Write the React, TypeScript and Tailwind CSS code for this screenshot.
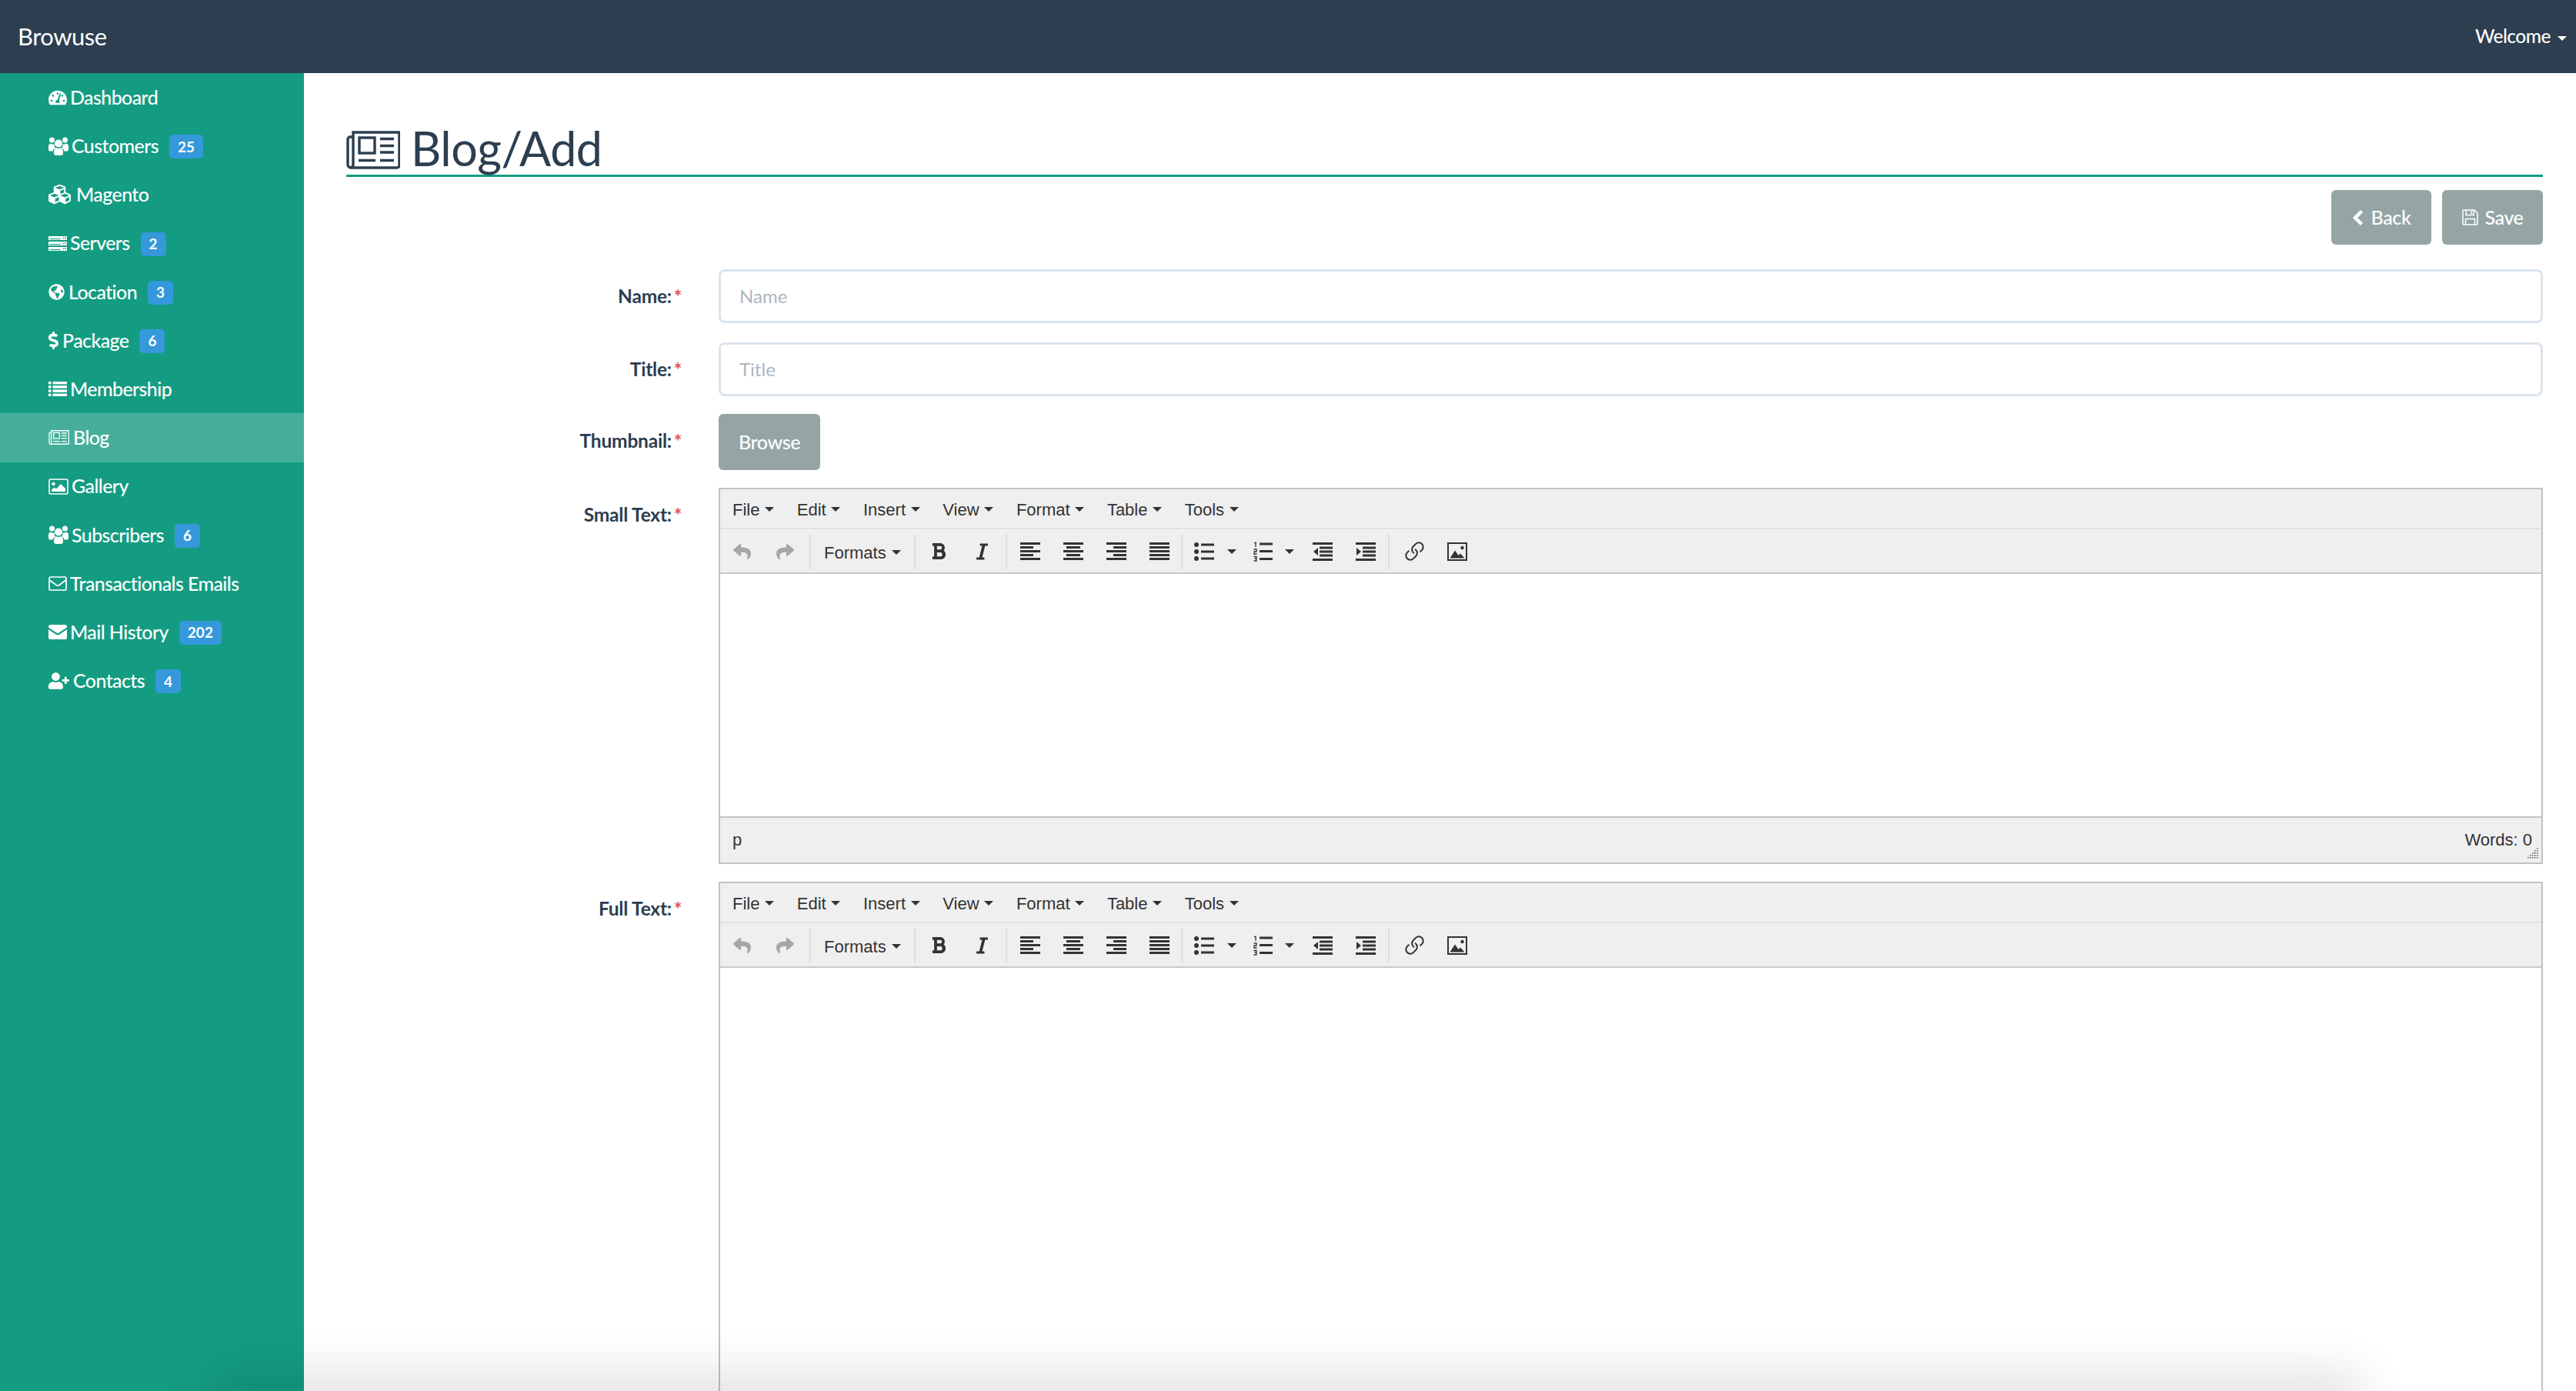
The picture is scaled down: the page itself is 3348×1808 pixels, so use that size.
import React from "react";
import {
  FaTachometerAlt,
  FaCubes,
  FaGlobeAmericas,
  FaDollarSign,
  FaUserPlus,
  FaReply,
  FaShare,
  FaBold,
  FaItalic,
} from "react-icons/fa";
import { Link } from "lucide-react";

const NewspaperIcon: React.FC<{ className?: string }> = ({ className }) => (
  <svg viewBox="0 0 70 50" fill="none" stroke="currentColor" strokeWidth="3.4" className={className}>
    <path d="M9 8H5a3 3 0 0 0-3 3v33a4 4 0 0 0 4 4h60a3 3 0 0 0 3-3V2H9v42a4 4 0 0 1-4 4" />
    <rect x="17" y="9" width="20" height="20" />
    <path d="M44 10.500h18M44 19.500h18M44 28h18M16 38.500h22M44 38.500h18" />
  </svg>
);

const UsersIcon = () => (
  <svg viewBox="0 0 26 24" fill="currentColor" className="w-[26px] h-[24px] mr-[4px]">
    <circle cx="13" cy="8.500" r="5" />
    <circle cx="4.500" cy="4" r="3.500" />
    <circle cx="21.500" cy="4" r="3.500" />
    <path d="M0 12.500q0-3.500 3-4 2 1.800 4.500.8-.5 3 1.500 5.200-2.800 1-3.500 4H2q-2 0-2-2z" />
    <path d="M26 12.500q0-3.500-3-4-2 1.800-4.500.8.5 3-1.500 5.200 2.800 1 3.500 4H24q2 0 2-2z" />
    <path d="M7 18.500q.5-3.500 3-4.500 3 2 6 0 2.500 1 3 4.500v2.500q0 3-3 3H10q-3 0-3-3z" />
  </svg>
);

const ServerIcon = () => (
  <svg viewBox="0 0 24 19" className="w-[24px] h-[19px] mr-[4px]">
    {[0, 7, 14].map((y) => (
      <g key={y}>
        <rect y={y} width="24" height="5" fill="currentColor" />
        <rect x="1.500" y={y + 3} width="14" height="1" fill="#149c82" />
        <rect x="19" y={y + 1.500} width="1.500" height="1.500" fill="#149c82" />
        <rect x="21.500" y={y + 1.500} width="1.500" height="1.500" fill="#149c82" />
      </g>
    ))}
  </svg>
);

const ListIcon = () => (
  <svg viewBox="0 0 24 19" fill="currentColor" className="w-[24px] h-[19px] mr-[4px]">
    {[0, 5.200, 10.400, 15.600].map((y) => (
      <g key={y}>
        <rect y={y} width="3.500" height="3.400" />
        <rect x="5.500" y={y} width="18.500" height="3.400" />
      </g>
    ))}
  </svg>
);

const GalleryIcon = () => (
  <svg viewBox="0 0 26 21" className="w-[26px] h-[21px] mr-[4px]">
    <rect x="1" y="1" width="24" height="19" rx="1.500" fill="none" stroke="currentColor" strokeWidth="1.600" />
    <circle cx="6.500" cy="7" r="2.300" fill="currentColor" />
    <path d="M4 17v-2.500l3.500-3 2.500 2 6-6.500 6 6v4z" fill="currentColor" />
  </svg>
);

const EnvelopeOutlineIcon = () => (
  <svg viewBox="0 0 24 19" fill="none" stroke="currentColor" strokeWidth="1.700" className="w-[24px] h-[19px] mr-[4px]">
    <rect x="1" y="1" width="22" height="17" rx="2" />
    <path d="M1.500 5l8.500 6.500q2 1.300 4 0L22.500 5" />
  </svg>
);

const EnvelopeIcon = () => (
  <svg viewBox="0 0 24 19" fill="currentColor" className="w-[24px] h-[19px] mr-[4px]">
    <path d="M0 2.500Q0 0 2 0h20q2 0 2 2.500v1L13.500 10.500q-1.500 1-3 0L0 3.500z" />
    <path d="M0 6l9.500 6.500q2.500 1.500 5 0L24 6v11q0 2-2 2H2q-2 0-2-2z" />
  </svg>
);

const SaveIcon = () => (
  <svg viewBox="0 0 21 21" fill="none" stroke="currentColor" strokeWidth="1.500" className="w-[21px] h-[21px] mr-[9px]">
    <path d="M2 1h14l4 4v14a1 1 0 0 1-1 1H2a1 1 0 0 1-1-1V2a1 1 0 0 1 1-1z" />
    <path d="M5 1v6.500h10V1M12 2.500v3.500" />
    <path d="M4.500 20v-7.500h12V20" />
  </svg>
);

interface NavItem {
  label: string;
  icon: React.ReactNode;
  badge?: string;
  active?: boolean;
}

const navItems: NavItem[] = [
  { label: "Dashboard", icon: <FaTachometerAlt className="w-[24px] h-[24px] mr-[4px]" /> },
  { label: "Customers", badge: "25", icon: <UsersIcon /> },
  { label: "Magento", icon: <FaCubes className="w-[29px] h-[29px] mr-[7px]" /> },
  { label: "Servers", badge: "2", icon: <ServerIcon /> },
  { label: "Location", badge: "3", icon: <FaGlobeAmericas className="w-[21px] h-[21px] mr-[5px]" /> },
  { label: "Package", badge: "6", icon: <FaDollarSign className="w-[13px] h-[25px] mr-[5px]" /> },
  { label: "Membership", icon: <ListIcon /> },
  { label: "Blog", active: true, icon: <NewspaperIcon className="w-[27px] h-[19px] mr-[5px]" /> },
  { label: "Gallery", icon: <GalleryIcon /> },
  { label: "Subscribers", badge: "6", icon: <UsersIcon /> },
  { label: "Transactionals Emails", icon: <EnvelopeOutlineIcon /> },
  { label: "Mail History", badge: "202", icon: <EnvelopeIcon /> },
  { label: "Contacts", badge: "4", icon: <FaUserPlus className="w-[27px] h-[22px] mr-[5px]" /> },
];

const Sidebar = () => (
  <aside className="w-[395px] shrink-0 bg-[#149c82] text-white">
    {navItems.map((item) => (
      <div
        key={item.label}
        className={`flex items-center h-[63.2px] pl-[63px] ${item.active ? "bg-[#45ae9a]" : ""}`}
      >
        {item.icon}
        <span className="text-[25px] font-medium tracking-[-0.6px]">{item.label}</span>
        {item.badge && (
          <span className="ml-[14px] mt-[2px] h-[31px] px-[11px] flex items-center rounded-[5px] bg-[#3498db] text-[19px] font-bold">
            {item.badge}
          </span>
        )}
      </div>
    ))}
  </aside>
);

const Caret: React.FC<{ className?: string }> = ({ className }) => (
  <span className={`inline-block w-0 h-0 border-x-[6px] border-x-transparent border-t-[6px] border-t-[#333] ${className ?? ""}`} />
);

const menus = ["File", "Edit", "Insert", "View", "Format", "Table", "Tools"];

const IconBtn: React.FC<{ w?: string; children: React.ReactNode }> = ({ w = "w-[56px]", children }) => (
  <div className={`${w} h-full flex items-center justify-center text-[#333]`}>{children}</div>
);

const AlignIcon: React.FC<{ rows: [number, number][] }> = ({ rows }) => (
  <svg viewBox="0 0 26 23" className="w-[26px] h-[23px]" fill="currentColor">
    {rows.map(([x, w], i) => (
      <rect key={i} x={x} y={i * 5} width={w} height="3" />
    ))}
  </svg>
);

const BulletIcon = () => (
  <svg viewBox="0 0 26 24" className="w-[26px] h-[24px]" fill="currentColor">
    <circle cx="3" cy="3" r="3" />
    <circle cx="3" cy="12" r="3" />
    <circle cx="3" cy="21" r="3" />
    <rect x="9" y="1.500" width="17" height="3" />
    <rect x="9" y="10.500" width="17" height="3" />
    <rect x="9" y="19.500" width="17" height="3" />
  </svg>
);

const NumberIcon = () => (
  <svg viewBox="0 0 25 26" className="w-[25px] h-[26px]" fill="none" stroke="currentColor" strokeWidth="1.300">
    <path d="M1 2l2-1v6" />
    <path d="M0.500 10h3.500v3H1v3h3.500" />
    <path d="M0.500 19.500h3.500v2.500H1.500M4 22v3H0.500" />
    <rect x="8" y="1.500" width="17" height="3" fill="currentColor" stroke="none" />
    <rect x="8" y="11" width="17" height="3" fill="currentColor" stroke="none" />
    <rect x="8" y="21" width="17" height="3" fill="currentColor" stroke="none" />
  </svg>
);

const IndentIcon: React.FC<{ flip?: boolean }> = ({ flip }) => (
  <svg viewBox="0 0 26 24" className="w-[26px] h-[24px]" fill="currentColor">
    <rect width="26" height="3" />
    <rect y="21" width="26" height="3" />
    {[5.500, 10.500, 15.500].map((y) => (
      <rect key={y} x="9" y={y} width="17" height="3" />
    ))}
    {flip ? <path d="M1 7l6 5-6 5z" /> : <path d="M7 7l-6 5 6 5z" />}
  </svg>
);

const ImageIcon = () => (
  <svg viewBox="0 0 26 24" className="w-[26px] h-[24px]">
    <rect x="1" y="1" width="24" height="22" fill="none" stroke="currentColor" strokeWidth="2" />
    <circle cx="19.500" cy="7" r="2.200" fill="currentColor" />
    <path d="M3.500 20.500l6.500-10 4.500 6.500 2.500-2.500 5.500 6z" fill="currentColor" />
  </svg>
);

const Toolbar = () => (
  <div className="flex items-center h-[55px] py-[5px] mt-[1px]">
    <div className="flex h-full w-[116px]">
      <IconBtn><FaReply className="w-[23px] h-[24px] text-[#a6a6a6]" /></IconBtn>
      <IconBtn><FaShare className="w-[23px] h-[24px] text-[#a6a6a6]" /></IconBtn>
    </div>
    <div className="flex items-center h-full w-[136px] border-l-2 border-[#dedede] pl-[17px] pt-[3px] text-[#333] text-[22px]">
      Formats
      <Caret className="ml-[7px]" />
    </div>
    <div className="flex h-full border-l-2 border-[#dedede] pl-[2px] pr-[3px]">
      <IconBtn><FaBold className="w-[18px] h-[25px]" /></IconBtn>
      <IconBtn><FaItalic className="w-[19px] h-[24px]" /></IconBtn>
    </div>
    <div className="flex h-full border-l-2 border-[#dedede] pl-[2px]">
      <IconBtn><AlignIcon rows={[[0, 26], [0, 17], [0, 26], [0, 17], [0, 26]]} /></IconBtn>
      <IconBtn><AlignIcon rows={[[0, 26], [4, 18], [0, 26], [4, 18], [0, 26]]} /></IconBtn>
      <IconBtn><AlignIcon rows={[[0, 26], [9, 17], [0, 26], [9, 17], [0, 26]]} /></IconBtn>
      <IconBtn><AlignIcon rows={[[0, 26], [0, 26], [0, 26], [0, 26], [0, 26]]} /></IconBtn>
    </div>
    <div className="flex h-full border-l-2 border-[#dedede] pl-[4px] pr-[1px]">
      <IconBtn w="w-[48px]"><BulletIcon /></IconBtn>
      <IconBtn w="w-[24px]"><Caret /></IconBtn>
      <IconBtn><NumberIcon /></IconBtn>
      <IconBtn w="w-[14px] mr-[8px]"><Caret /></IconBtn>
      <IconBtn><IndentIcon /></IconBtn>
      <IconBtn><IndentIcon flip /></IconBtn>
    </div>
    <div className="flex h-full border-l-2 border-[#dedede] pl-[4px]">
      <IconBtn><Link className="w-[27px] h-[27px] -scale-x-100 rotate-90" strokeWidth={1.800} /></IconBtn>
      <IconBtn><ImageIcon /></IconBtn>
    </div>
  </div>
);

const Editor: React.FC<{ bodyHeight: string; status?: boolean }> = ({ bodyHeight, status }) => (
  <div className="border-2 border-[#c2c2c2] bg-white font-['Liberation_Sans',sans-serif]">
    <div className="bg-[#efefef] border-b-2 border-[#c9c9c9]">
      <div className="flex items-center h-[52px] pl-[16px] pt-[2px] gap-[29.800px] border-b-2 border-[#e2e2e2] text-[#333] text-[22px]">
        {menus.map((m) => (
          <span key={m} className="flex items-center">
            {m}
            <Caret className="ml-[6.500px]" />
          </span>
        ))}
      </div>
      <Toolbar />
    </div>
    <div className={bodyHeight} />
    {status && (
      <div className="relative flex items-center justify-between h-[60px] pl-[16px] pr-[12px] pb-[2px] bg-[#efefef] border-t-2 border-[#c2c2c2] text-[#333] text-[22px]">
        <span>p</span>
        <span>Words: 0</span>
        <svg viewBox="0 0 14 15" className="absolute right-[4px] bottom-[4px] w-[14px] h-[15px]" fill="#555">
          {[[12, 0], [12, 3], [9, 3], [12, 6], [9, 6], [6, 6], [12, 9], [9, 9], [6, 9], [3, 9], [12, 12], [9, 12], [6, 12], [3, 12], [0, 12]].map(([x, y]) => (
            <rect key={`${x}-${y}`} x={x} y={y} width="1.500" height="1.500" />
          ))}
        </svg>
      </div>
    )}
  </div>
);

const Field: React.FC<{ label: string; className?: string; children: React.ReactNode }> = ({ label, className, children }) => (
  <div className={`flex ${className ?? ""}`}>
    <label className="w-[436px] shrink-0 pt-[19px] text-right text-[#2c3e50] text-[24.500px] font-bold tracking-[-0.2px] leading-[32px]">
      {label}
      <span className="relative top-[1px] ml-[3px] text-[#e74c3c] text-[24px]">*</span>
    </label>
    <div className="ml-[48px] flex-1 min-w-0">{children}</div>
  </div>
);

const TextInput: React.FC<{ placeholder: string }> = ({ placeholder }) => (
  <input
    placeholder={placeholder}
    className="block w-full h-[70px] px-[24px] pb-[2px] border-[3px] border-[#dce4ec] rounded-[8px] text-[24px] outline-none placeholder:text-[#acb6c0]"
  />
);

export default function App() {
  return (
    <div className="relative w-[3348px] h-[1808px] overflow-hidden bg-white font-['Lato',sans-serif]">
      <header className="flex items-center justify-between h-[95px] pl-[23px] pr-[12px] bg-[#2c3e50] text-white">
        <span className="text-[31px] tracking-[-0.5px]">Browuse</span>
        <span className="flex items-center text-[24.500px] font-medium tracking-[-0.5px]">
          Welcome
          <span className="ml-[9px] mt-[4px] w-0 h-0 border-x-[6px] border-x-transparent border-t-[6px] border-t-white" />
        </span>
      </header>
      <div className="flex h-[1713px]">
        <Sidebar />
        <main className="flex-1 min-w-0 pl-[55px] pr-[43px]">
          <div className="flex items-end h-[135px] border-b-[3px] border-[#149c82] text-[#2c3e50]">
            <NewspaperIcon className="w-[70px] h-[50px] mb-[7px] mr-[14px]" />
            <h1 className="text-[61px] leading-[68px] tracking-[-0.5px]">Blog/Add</h1>
          </div>
          <div className="flex justify-end gap-[14px] mt-[17px] text-white text-[25px] font-medium tracking-[-0.4px]">
            <button className="flex items-center justify-center w-[130px] h-[71px] rounded-[6px] bg-[#95a5a6]">
              <svg viewBox="0 0 15 22" fill="none" stroke="currentColor" strokeWidth="4.500" className="w-[15px] h-[22px] mr-[10px]">
                <path d="M12.500 2.500L4 11l8.500 8.500" />
              </svg>
              Back
            </button>
            <button className="flex items-center justify-center w-[131px] h-[71px] rounded-[6px] bg-[#95a5a6]">
              <SaveIcon />
              Save
            </button>
          </div>
          <div className="mt-[32px]">
            <Field label="Name:">
              <TextInput placeholder="Name" />
            </Field>
            <Field label="Title:" className="mt-[25px]">
              <TextInput placeholder="Title" />
            </Field>
            <Field label="Thumbnail:" className="mt-[23px]">
              <button className="w-[132px] h-[73px] rounded-[6px] bg-[#95a5a6] text-white text-[25px] font-medium tracking-[-0.4px]">
                Browse
              </button>
            </Field>
            <Field label="Small Text:" className="mt-[23px]">
              <Editor bodyHeight="h-[315px]" status />
            </Field>
            <Field label="Full Text:" className="mt-[23px]">
              <Editor bodyHeight="h-[800px]" />
            </Field>
          </div>
        </main>
      </div>
      <div className="absolute left-[300px] right-[300px] -bottom-[30px] h-[30px] rounded-full pointer-events-none shadow-[0_0_60px_30px_rgba(0,0,0,0.1)]" />
    </div>
  );
}
